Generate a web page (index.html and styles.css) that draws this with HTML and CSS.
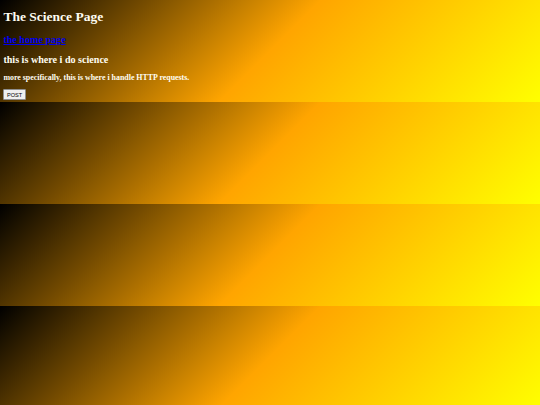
FILE: index.html
```html
<!DOCTYPE html>
<html>
<head>
    <title>The Science Page</title>
    <meta charset="utf-8">
    <link rel="stylesheet" href="styles.css">
</head>
<body>
    <h1 class="title">The Science Page</h1>
    <h2 class="sub"><a href="index.html" class="home">the home page</a></h2>
    <h2 class="sub">this is where i do science</h2>
    <h3 class="note">more specifically, this is where i handle HTTP requests.</h3>

    <!-- sends a POST to the same page -->
    <form method="post" class="req">
        <button type="submit" class="post-btn">POST</button>
    </form>
</body>
</html>
```

FILE: styles.css
```css
body {
    background: linear-gradient(135deg, black, orange, yellow);
    color: #fffdf2;
    font-family: "Liberation Serif", "Times New Roman", serif;
    font-size: 6.75px;
    margin: 3.4px 3.4px 1.4px;
}

.title {
    font-size: 13.5px;
    margin: 6px 0 9px;
}

.sub {
    font-size: 10.1px;
    margin: 8.4px 0;
}

.home {
    color: #0000ee;
}

.note {
    font-size: 7.9px;
    margin: 7.9px 0 7px;
}

.req {
    margin: 0;
}

.post-btn {
    font-family: "Liberation Sans", Arial, sans-serif;
    font-size: 5.6px;
    color: black;
    background: #efefef;
    border: 1px solid #8f8f8f;
    border-radius: 1px;
    padding: 1.5px 2.6px;
    line-height: normal;
}
```
